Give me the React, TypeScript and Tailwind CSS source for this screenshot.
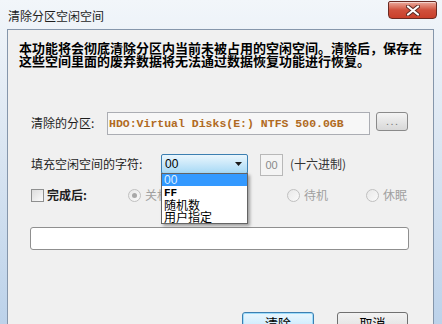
import React from "react";

const cjk = { fontFamily: '"Noto Sans CJK SC", "Noto Sans", sans-serif' };
const mono = { fontFamily: '"Liberation Mono", "DejaVu Sans Mono", monospace' };

function Radio({ label, checked }: { label: string; checked?: boolean }) {
  return (
    <div className="flex items-center gap-[4px]">
      <span className="relative flex h-[13px] w-[13px] items-center justify-center rounded-full border border-[#c0c0c0] bg-gradient-to-br from-[#e8e8e8] to-[#fafafa]">
        {checked && <span className="h-[5px] w-[5px] rounded-full bg-[#a8a8a8]" />}
      </span>
      <span className="text-[12px] leading-[14px] text-[#a0a0a0]">{label}</span>
    </div>
  );
}

export default function App() {
  return (
    <div
      className="flex h-[324px] w-[442px] flex-col overflow-hidden bg-gradient-to-b from-[#f2f6fa] via-[#d8e4f1] to-[#bcd2ea]"
      style={cjk}
    >
      {/* Title bar */}
      <div className="flex h-[29px] shrink-0 items-start justify-between">
        <span className="ml-[8px] mt-[8px] text-[12px] leading-[16px] text-[#1e1e1e]">清除分区空闲空间</span>
        <button className="mr-[5px] mt-[1px] flex h-[18px] w-[49px] items-center justify-center rounded-b-[4px] rounded-t-[2px] border border-[#6b2a22] bg-gradient-to-b from-[#e9a99c] via-[#d0503c] to-[#c93f2a] shadow-[inset_0_1px_0_rgba(255,255,255,0.5)]">
          <svg width="14" height="11" viewBox="0 0 14 11">
            <path d="M2 1.5 L12 9.5 M12 1.5 L2 9.5" stroke="#5a2a24" strokeWidth="4" strokeLinecap="round" />
            <path d="M2 1.5 L12 9.5 M12 1.5 L2 9.5" stroke="#ffffff" strokeWidth="2.2" strokeLinecap="round" />
          </svg>
        </button>
      </div>

      {/* Client area */}
      <div className="ml-[7px] mr-[8px] flex flex-1 flex-col border border-[#8596ab] bg-[#f0f0f0]">
        <div className="ml-[11px] mt-[11px] whitespace-nowrap text-[13px] font-bold leading-[13px] text-black">
          本功能将会彻底清除分区内当前未被占用的空闲空间。清除后，保存在
          <br />
          这些空间里面的废弃数据将无法通过数据恢复功能进行恢复。
        </div>

        {/* Partition row */}
        <div className="ml-[23px] mt-[45px] flex h-[23px] items-start">
          <span className="mt-[4px] w-[76px] text-[12px] leading-[14px] text-[#1e1e1e]">清除的分区:</span>
          <div className="flex h-[23px] w-[263px] items-center overflow-hidden border border-[#abadb3] bg-[#f7f7f7]">
            <span className="pl-[1px] text-[11.5px] font-bold text-[#b06a22]" style={mono}>
              HDO:Virtual Disks(E:) NTFS 500.0GB
            </span>
          </div>
          <button className="ml-[6px] flex h-[19px] w-[32px] items-center justify-center rounded-[3px] border border-[#8a8a8a] bg-gradient-to-b from-[#f4f4f4] to-[#d8d8d8] text-[9px] leading-none text-[#777]">
            . . .
          </button>
        </div>

        {/* Fill char row */}
        <div className="ml-[23px] mt-[19px] flex h-[22px] items-start">
          <span className="mt-[3px] w-[130px] text-[12px] leading-[14px] text-[#1e1e1e]">填充空闲空间的字符:</span>
          <div className="relative">
            <div className="flex h-[20px] w-[87px] items-center justify-between rounded-[2px] border border-[#3c7fb1] bg-gradient-to-b from-[#eaf6fd] to-[#a7d9f5] pl-[3px] pr-[5px]">
              <span className="text-[12px] leading-none text-black" style={{ fontFamily: '"Liberation Sans", sans-serif' }}>
                00
              </span>
              <svg width="7" height="4" viewBox="0 0 7 4">
                <path d="M0 0 H7 L3.5 4 Z" fill="#1a1a1a" />
              </svg>
            </div>
            {/* Open dropdown list */}
            <div className="absolute left-0 top-[19px] z-10 flex h-[51px] w-[87px] flex-col border border-[#646464] bg-white shadow-[2px_2px_3px_rgba(0,0,0,0.35)]">
              <div
                className="h-[12px] bg-[#3399ff] pl-[2px] text-[12px] leading-[12px] text-[#dff0ff]"
                style={{ fontFamily: '"Liberation Sans", sans-serif' }}
              >
                00
              </div>
              <div className="mt-[1px] h-[12px] pl-[2px] text-[11px] font-bold leading-[12px] text-black" style={mono}>
                FF
              </div>
              <div className="h-[12px] pl-[2px] text-[12px] leading-[12px] text-black">随机数</div>
              <div className="h-[12px] pl-[2px] text-[12px] leading-[12px] text-black">用户指定</div>
            </div>
          </div>
          <div
            className="ml-[12px] flex h-[22px] w-[23px] items-center justify-center border border-[#b8b8b8] bg-[#f4f4f4] text-[11px] text-[#8a8a8a]"
            style={{ fontFamily: '"Liberation Sans", sans-serif' }}
          >
            00
          </div>
          <span className="ml-[7px] mt-[3px] text-[12px] leading-[14px] text-[#333]">(十六进制)</span>
        </div>

        {/* After-finish row */}
        <div className="ml-[23px] mt-[11px] flex h-[16px] items-center">
          <div className="flex w-[97px] items-center gap-[3px]">
            <span className="h-[13px] w-[13px] border border-[#8e8f8f] bg-gradient-to-br from-[#dcdcdc] to-[#fbfbfb]" />
            <span className="text-[12px] font-bold leading-[14px] text-[#1e1e1e]">完成后:</span>
          </div>
          <div className="w-[159px]">
            <Radio label="关机" checked />
          </div>
          <div className="w-[79px]">
            <Radio label="待机" />
          </div>
          <Radio label="休眠" />
        </div>

        {/* Progress */}
        <div className="ml-[22px] mt-[24px] h-[23px] w-[379px] rounded-[3px] border border-[#8f8f8f] bg-white" />

        {/* Buttons */}
        <div className="mt-[62px] flex justify-end gap-[23px] pr-[25px]">
          <button className="flex h-[23px] w-[72px] items-start justify-center rounded-[3px] border border-[#3c7fb1] bg-gradient-to-b from-[#eaf6fd] to-[#bee6fd] pt-[2px] text-[13px] leading-[16px] text-black shadow-[inset_0_0_0_1px_#9ddcfb]">
            清除
          </button>
          <button className="flex h-[23px] w-[71px] items-start justify-center rounded-[3px] border border-[#707070] bg-gradient-to-b from-[#f2f2f2] to-[#dddddd] pt-[2px] text-[13px] leading-[16px] text-black">
            取消
          </button>
        </div>
      </div>
    </div>
  );
}
